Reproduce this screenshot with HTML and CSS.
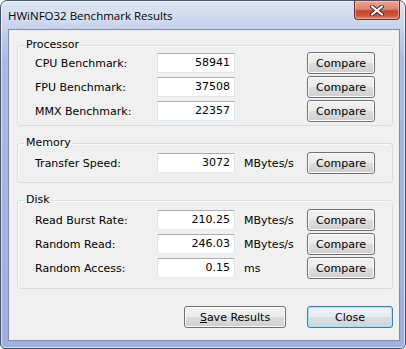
FILE: index.html
```html
<!DOCTYPE html>
<html lang="en">
<head>
    <meta charset="UTF-8">
    <meta name="viewport" content="width=device-width, initial-scale=1.0">
    <title>HWiNFO32 Benchmark Results</title>
    <link rel="stylesheet" href="styles.css">
</head>
<body>
    <div class="window">
        <div class="title-bar">
            <span class="title-text">HWiNFO32 Benchmark Results</span>
            <div class="close-box">
                <svg width="14" height="11" viewBox="0 0 14 11">
                    <path d="M2 1.5 L12 9.5 M12 1.5 L2 9.5" stroke="#3a2a2a" stroke-width="4" stroke-linecap="round"/>
                    <path d="M2 1.5 L12 9.5 M12 1.5 L2 9.5" stroke="#fff" stroke-width="2.2" stroke-linecap="round"/>
                </svg>
            </div>
        </div>

        <div class="client">
            <fieldset class="group group-compact">
                <legend>Processor</legend>
                <div class="row">
                    <span class="row-label">CPU Benchmark:</span>
                    <span class="value-box">58941</span>
                    <span class="unit"></span>
                    <button class="btn">Compare</button>
                </div>
                <div class="row">
                    <span class="row-label">FPU Benchmark:</span>
                    <span class="value-box">37508</span>
                    <span class="unit"></span>
                    <button class="btn">Compare</button>
                </div>
                <div class="row">
                    <span class="row-label">MMX Benchmark:</span>
                    <span class="value-box">22357</span>
                    <span class="unit"></span>
                    <button class="btn">Compare</button>
                </div>
            </fieldset>

            <fieldset class="group group-memory">
                <legend>Memory</legend>
                <div class="row">
                    <span class="row-label">Transfer Speed:</span>
                    <span class="value-box">3072</span>
                    <span class="unit">MBytes/s</span>
                    <button class="btn">Compare</button>
                </div>
            </fieldset>

            <fieldset class="group group-disk">
                <legend>Disk</legend>
                <div class="row">
                    <span class="row-label">Read Burst Rate:</span>
                    <span class="value-box">210.25</span>
                    <span class="unit">MBytes/s</span>
                    <button class="btn">Compare</button>
                </div>
                <div class="row">
                    <span class="row-label">Random Read:</span>
                    <span class="value-box">246.03</span>
                    <span class="unit">MBytes/s</span>
                    <button class="btn">Compare</button>
                </div>
                <div class="row">
                    <span class="row-label">Random Access:</span>
                    <span class="value-box">0.15</span>
                    <span class="unit">ms</span>
                    <button class="btn">Compare</button>
                </div>
            </fieldset>

            <div class="dialog-buttons">
                <button class="btn btn-save"><u>S</u>ave Results</button>
                <button class="btn btn-close">Close</button>
            </div>
        </div>
    </div>
</body>
</html>
```

FILE: styles.css
```css
html, body {
    margin: 0;
    padding: 0;
    background: #ffffff;
}

.window {
    box-sizing: border-box;
    width: 406px;
    height: 349px;
    border: 1px solid #4a5567;
    border-radius: 7px 7px 5px 5px;
    background: linear-gradient(180deg, #dce5f3 0px, #c5d2ec 28px, #abbae4 60px, #9eafe0 100%);
    box-shadow: inset 0 0 0 1px rgba(255, 255, 255, 0.55);
    display: flex;
    flex-direction: column;
    font-family: "DejaVu Sans", Verdana, sans-serif;
    font-size: 11px;
    color: #000;
}

.title-bar {
    height: 28px;
    display: flex;
    align-items: flex-start;
    justify-content: space-between;
}

.title-text {
    font-family: "Open Sans", "Noto Sans", sans-serif;
    font-size: 11.5px;
    line-height: 14px;
    padding: 8px 0 0 7px;
    color: #000;
    text-shadow: 0 0 6px rgba(255, 255, 255, 0.9);
}

.close-box {
    width: 46px;
    height: 19px;
    margin-right: 5px;
    box-sizing: border-box;
    border: 1px solid #6b2d22;
    border-top: none;
    border-radius: 0 0 4px 4px;
    background: linear-gradient(180deg, #e9a797 0%, #dd8570 45%, #c4432b 55%, #c9553a 80%, #e08a6a 100%);
    box-shadow: inset 0 0 0 1px rgba(255, 210, 195, 0.5);
    display: flex;
    align-items: center;
    justify-content: center;
}

.client {
    box-sizing: border-box;
    width: 392px;
    height: 312px;
    margin-left: 7px;
    border: 1px solid #7f8ea8;
    background: #f0f0f0;
    padding: 9px 6px 0 8px;
}

.group {
    margin: 0;
    padding: 2px 15px 7px 17px;
    width: 376px;
    box-sizing: border-box;
    border: 1px solid #d5dfe5;
    border-radius: 3px;
    box-shadow: inset 1px 1px 0 #fafbfc;
}

.group + .group {
    margin-top: 11px;
}

.group-compact {
    padding-top: 0;
    padding-bottom: 2px;
}

.group-disk {
    padding-bottom: 8px;
}

.group legend {
    margin-left: -11px;
    padding: 0 2px;
    line-height: 12px;
}

.row {
    display: grid;
    grid-template-columns: 122px 78px 72px 68px;
    align-items: center;
    height: 24px;
}

.value-box {
    box-sizing: border-box;
    height: 20px;
    line-height: 18px;
    text-align: right;
    padding-right: 4px;
    background: #fff;
    border: 1px solid #e2e3ea;
    border-top-color: #abadb3;
    border-bottom-color: #e3e9ef;
}

.unit {
    padding-left: 9px;
}

.btn {
    box-sizing: border-box;
    height: 22px;
    padding: 0;
    font-family: "DejaVu Sans", Verdana, sans-serif;
    font-size: 11px;
    color: #000;
    border: 1px solid #707070;
    border-radius: 3px;
    background: linear-gradient(180deg, #f2f2f2 0%, #ebebeb 48%, #dddddd 52%, #cfcfcf 100%);
    box-shadow: inset 0 0 0 1px #fcfcfc;
}

.dialog-buttons {
    display: flex;
    justify-content: flex-end;
    gap: 21px;
    margin-top: 17px;
}

.btn-save {
    width: 102px;
}

.btn-close {
    width: 86px;
    border-color: #3c7fb1;
    box-shadow: inset 0 0 0 1px #a8e4f8;
    background: linear-gradient(180deg, #eef3f6 0%, #e6ecf0 48%, #d8dfe4 52%, #cdd5db 100%);
}
```
